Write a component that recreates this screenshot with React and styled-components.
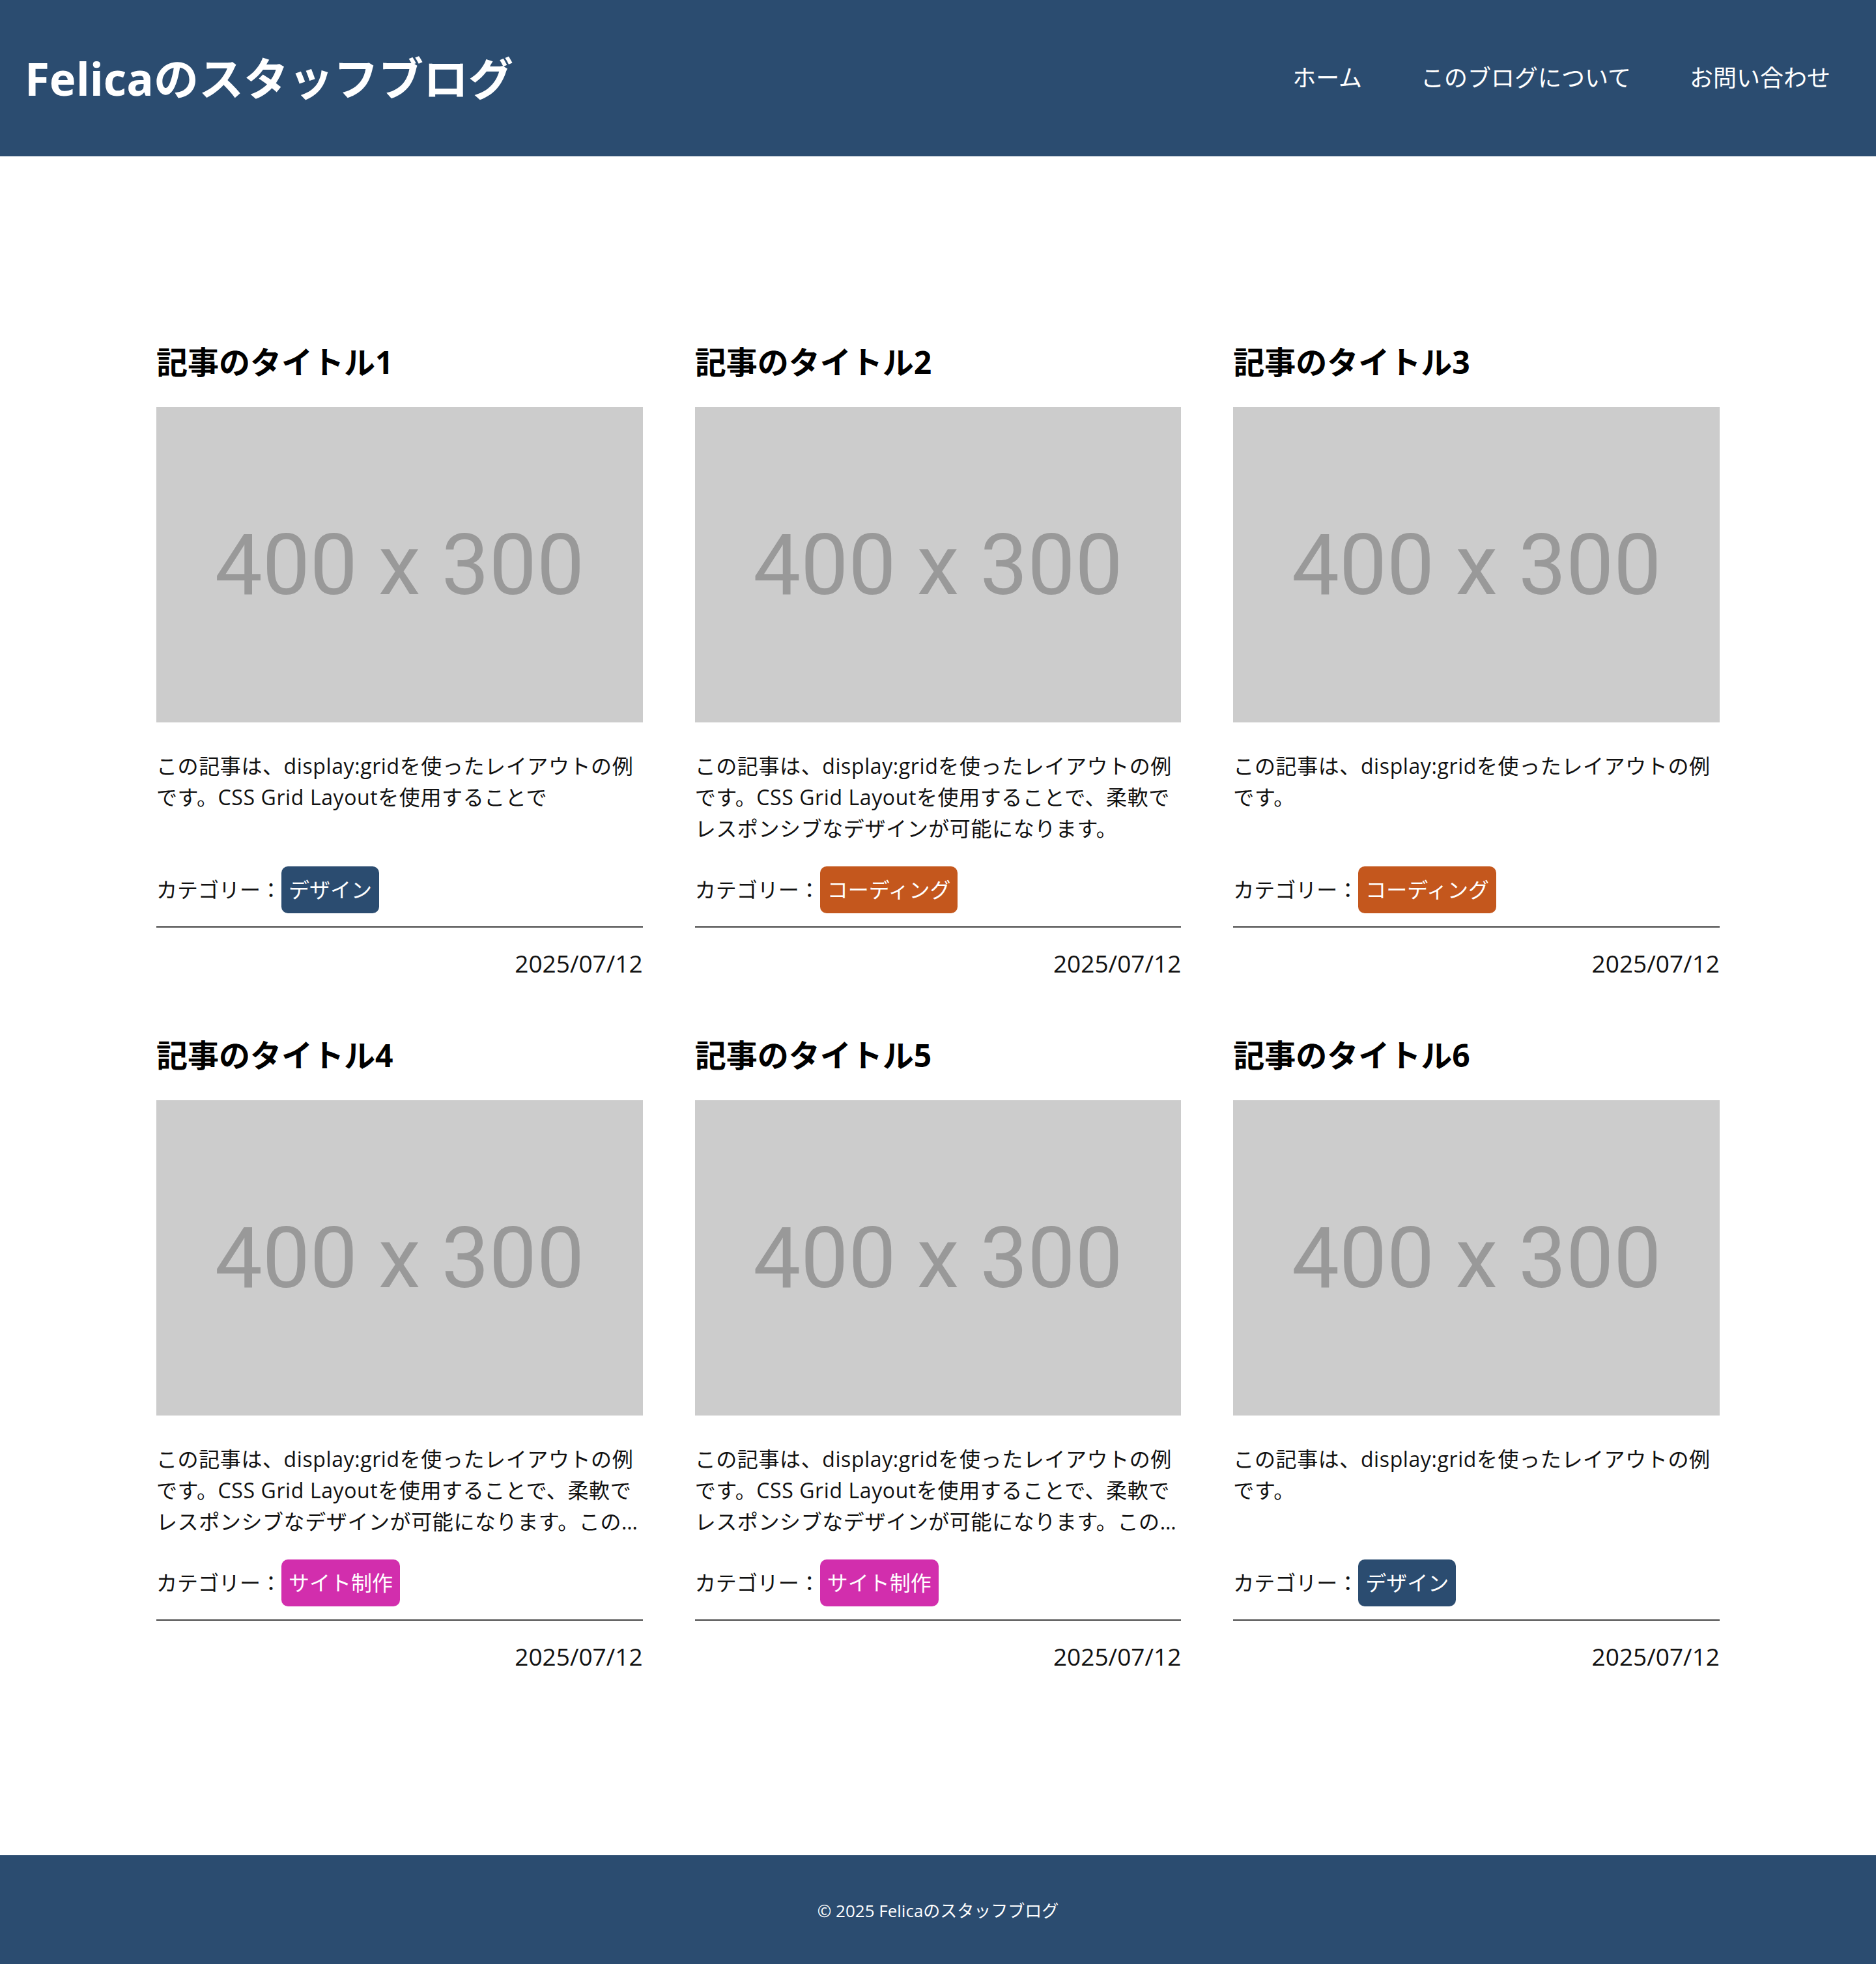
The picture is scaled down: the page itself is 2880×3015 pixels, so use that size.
import React from 'react'
import styled, { createGlobalStyle } from 'styled-components'

const GlobalStyle = createGlobalStyle`
  body {
    margin: 0;
    background: #fff;
    color: #111;
    font-family: "Open Sans", "Noto Sans CJK JP", sans-serif;
  }
`

const posts = [
  { id: 1, cat: 'design', text: 'この記事は、display:gridを使ったレイアウトの例です。CSS Grid Layoutを使用することで' },
  { id: 2, cat: 'coding', text: 'この記事は、display:gridを使ったレイアウトの例です。CSS Grid Layoutを使用することで、柔軟でレスポンシブなデザインが可能になります。' },
  { id: 3, cat: 'coding', text: 'この記事は、display:gridを使ったレイアウトの例です。' },
  { id: 4, cat: 'site', text: 'この記事は、display:gridを使ったレイアウトの例です。CSS Grid Layoutを使用することで、柔軟でレスポンシブなデザインが可能になります。この記事は、display:gridを使ったレイアウトの例です。' },
  { id: 5, cat: 'site', text: 'この記事は、display:gridを使ったレイアウトの例です。CSS Grid Layoutを使用することで、柔軟でレスポンシブなデザインが可能になります。この記事は、display:gridを使ったレイアウトの例です。' },
  { id: 6, cat: 'design', text: 'この記事は、display:gridを使ったレイアウトの例です。' },
]

const categories = {
  design: { label: 'デザイン', color: '#2b4c70' },
  coding: { label: 'コーディング', color: '#c4571d' },
  site: { label: 'サイト制作', color: '#d22ead' },
}

export default function App() {
  return (
    <Page>
      <GlobalStyle />
      <Header>
        <SiteTitle>Felicaのスタッフブログ</SiteTitle>
        <Nav>
          <NavLink href="#">ホーム</NavLink>
          <NavLink href="#">このブログについて</NavLink>
          <NavLink href="#">お問い合わせ</NavLink>
        </Nav>
      </Header>
      <Main>
        <Grid>
          {posts.map(p => <Card key={p.id} {...p} />)}
        </Grid>
      </Main>
      <Footer>© 2025 Felicaのスタッフブログ</Footer>
    </Page>
  )
}

const Card = ({ id, cat, text }) => (
  <Article>
    <Title>記事のタイトル{id}</Title>
    <Thumb>400 x 300</Thumb>
    <Excerpt>{text}</Excerpt>
    <CategoryRow>
      カテゴリー：<Badge $color={categories[cat].color}>{categories[cat].label}</Badge>
    </CategoryRow>
    <Divider />
    <Date>2025/07/12</Date>
  </Article>
)

const Page = styled.div`
  min-height: 100vh;
  display: flex;
  flex-direction: column;
`

const Header = styled.header`
  height: 240px;
  box-sizing: border-box;
  padding: 0 70px 0 38px;
  background: #2b4c70;
  color: #fff;
  display: flex;
  align-items: center;
  justify-content: space-between;
`

const SiteTitle = styled.h1`
  margin: 0;
  font-size: 69px;
  font-weight: 700;
  line-height: 1.4;
`

const Nav = styled.nav`
  display: flex;
  gap: 90px;
`

const NavLink = styled.a`
  color: #fff;
  text-decoration: none;
  font-size: 36px;
  line-height: 1.5;
`

const Main = styled.main`
  flex: 1;
  padding: 282px 0 281px;
`

const Grid = styled.div`
  max-width: 2400px;
  margin: 0 auto;
  display: grid;
  grid-template-columns: repeat(3, 1fr);
  column-gap: 80px;
  row-gap: 83px;
`

const Article = styled.article`
  display: flex;
  flex-direction: column;
`

const Title = styled.h2`
  margin: 0 0 36px;
  font-size: 48px;
  line-height: 67px;
  font-weight: 700;
  color: #000;
`

const Thumb = styled.div`
  height: 484px;
  background: #cccccc;
  color: #999999;
  display: flex;
  align-items: center;
  justify-content: center;
  font-family: Roboto, "Liberation Sans", sans-serif;
  font-size: 130px;
`

const Excerpt = styled.p`
  margin: 43px 0 0;
  font-size: 32px;
  line-height: 48px;
  letter-spacing: 0.6px;
  height: 144px;
  color: #111;
  display: -webkit-box;
  -webkit-box-orient: vertical;
  -webkit-line-clamp: 3;
  overflow: hidden;
`

const CategoryRow = styled.div`
  margin-top: 34px;
  display: flex;
  align-items: center;
  font-size: 32px;
  line-height: 48px;
  color: #111;
`

const Badge = styled.span`
  background: ${p => p.$color};
  color: #fff;
  padding: 12px 11px;
  border-radius: 10px;
  font-size: 32px;
  line-height: 48px;
`

const Divider = styled.hr`
  margin: 20px 0 0;
  border: 0;
  border-top: 2px solid #444;
`

const Date = styled.time`
  margin-top: 31px;
  text-align: right;
  font-size: 37px;
  line-height: 48px;
  color: #111;
`

const Footer = styled.footer`
  height: 168px;
  background: #2b4c70;
  color: #fff;
  display: flex;
  align-items: center;
  justify-content: center;
  font-size: 26px;
`
